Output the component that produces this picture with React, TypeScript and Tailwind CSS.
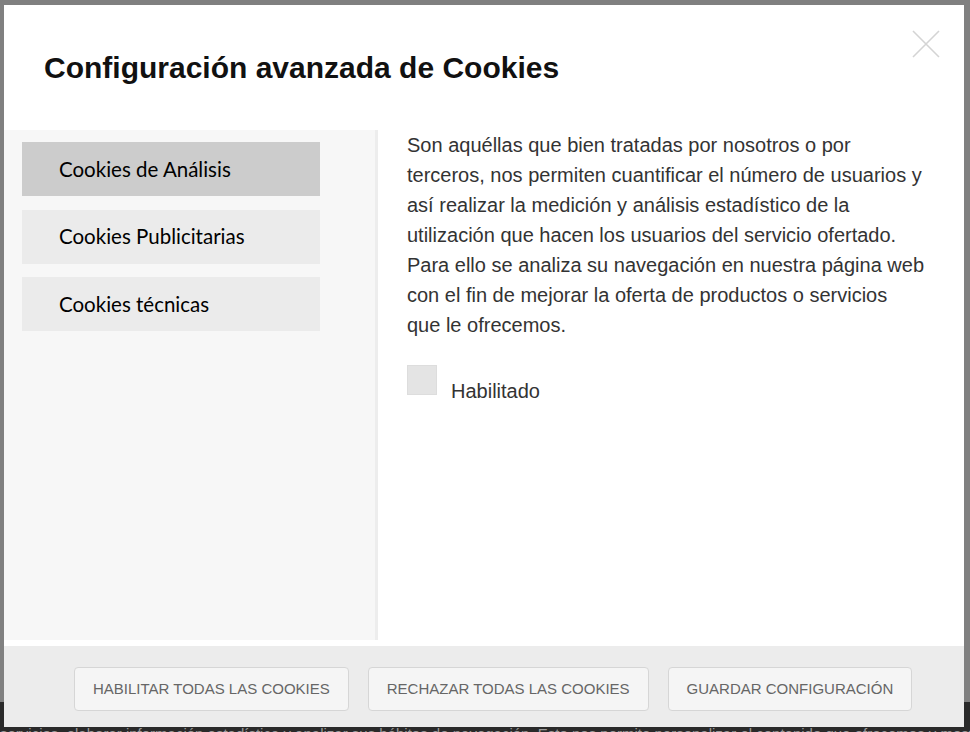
import { useState } from 'react';

/**
 * Advanced cookie settings dialog over a dimmed page
 */

const tabs = [
  {
    id: 'analisis',
    label: 'Cookies de Análisis',
    text: 'Son aquéllas que bien tratadas por nosotros o por terceros, nos permiten cuantificar el número de usuarios y así realizar la medición y análisis estadístico de la utilización que hacen los usuarios del servicio ofertado. Para ello se analiza su navegación en nuestra página web con el fin de mejorar la oferta de productos o servicios que le ofrecemos.',
  },
  {
    id: 'publicitarias',
    label: 'Cookies Publicitarias',
    text: 'Son aquéllas que permiten la gestión de los espacios publicitarios que, en su caso, el editor haya incluido en la página web.',
  },
  {
    id: 'tecnicas',
    label: 'Cookies técnicas',
    text: 'Son aquéllas que permiten al usuario la navegación a través de la página web y la utilización de las diferentes opciones o servicios que en ella existen.',
  },
];

const buttons = ['Habilitar todas las cookies', 'Rechazar todas las cookies', 'Guardar configuración'];

export default function App() {
  const [active, setActive] = useState('analisis');
  const [enabled, setEnabled] = useState<Record<string, boolean>>({});
  const current = tabs.find((t) => t.id === active)!;

  return (
    <div
      className="relative w-[970px] h-[732px] overflow-hidden flex flex-col bg-[#808080]"
      style={{ fontFamily: '"Liberation Sans", Arial, sans-serif' }}
    >
      {/* Page behind the overlay */}
      <div className="flex-1" />
      <div className="h-[30px] bg-[#2a2a2a] pt-[23px] text-[15px] leading-[18px] text-[#9a9a9a] whitespace-nowrap">
        servicios, elaborar información estadística y analizar sus hábitos de navegación. Esto nos permite personalizar el contenido que ofrecemos y mostrarle
      </div>

      {/* Modal */}
      <div className="absolute left-[4px] top-[5px] w-[960px] h-[722px] bg-white flex flex-col">
        <button className="absolute right-[24px] top-[25px] w-[28px] h-[28px] flex items-center justify-center">
          <svg width="28" height="28" viewBox="0 0 28 28">
            <path d="M1 1 L27 27 M27 1 L1 27" stroke="#d4d4d4" strokeWidth="1.6" fill="none" />
          </svg>
        </button>

        <div className="h-[125px] pl-[40px] pt-[46px]">
          <h2 className="text-[30px] leading-[34px] font-bold text-[#111]">Configuración avanzada de Cookies</h2>
        </div>

        <div className="flex h-[510px]">
          <div className="w-[374px] bg-[#f7f7f7] border-r-[3px] border-[#ededed] pl-[18px] pt-[12px] flex flex-col gap-[13.5px]">
            {tabs.map((t) => (
              <button
                key={t.id}
                onClick={() => setActive(t.id)}
                className={`w-[298px] h-[54px] text-left pl-[37px] text-[20.5px] text-black ${
                  t.id === active ? 'bg-[#cccccc]' : 'bg-[#ebebeb]'
                }`}
                style={{ fontFamily: 'Lato, "Open Sans", sans-serif' }}
              >
                {t.label}
              </button>
            ))}
          </div>

          <div className="flex-1 pl-[29px]">
            <p className="w-[518px] text-[20px] leading-[30px] text-[#333]">{current.text}</p>
            <label className="mt-[25px] flex items-start gap-[14px] cursor-pointer">
              <input
                type="checkbox"
                className="sr-only"
                checked={!!enabled[active]}
                onChange={(e) => setEnabled({ ...enabled, [active]: e.target.checked })}
              />
              <span className="w-[30px] h-[30px] bg-[#e4e4e4] border border-[#dddddd] flex items-center justify-center text-[#555]">
                {enabled[active] ? '✓' : ''}
              </span>
              <span className="mt-[11px] text-[20px] leading-[30px] text-[#333]">Habilitado</span>
            </label>
          </div>
        </div>

        <div className="mt-[6px] h-[81px] bg-[#ececec] pl-[70px] pt-[21px] flex items-start gap-[19px]">
          {buttons.map((b) => (
            <button
              key={b}
              className="h-[44px] px-[18px] bg-[#f5f5f5] border border-[#d6d6d6] rounded-[4px] uppercase text-[15px] text-[#666]"
            >
              {b}
            </button>
          ))}
        </div>
      </div>
    </div>
  );
}
